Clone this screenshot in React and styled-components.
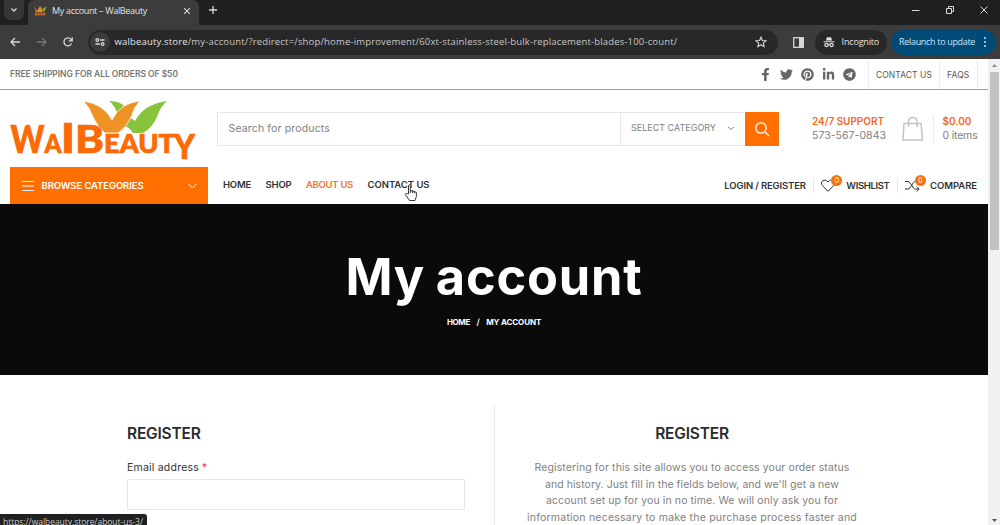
import React from 'react';
import styled, { createGlobalStyle } from 'styled-components';
import { FaFacebookF, FaTwitter, FaPinterest, FaLinkedinIn, FaTelegram } from 'react-icons/fa';

const GlobalStyle = createGlobalStyle`
    * { box-sizing: border-box; }
    html, body { margin: 0; height: 525px; overflow: hidden; background: #fff; }
`;

const Browser = styled.div`
    width: 1000px;
    height: 525px;
    display: flex;
    flex-direction: column;
    overflow: hidden;
    position: relative;
    font-family: 'Inter', 'Liberation Sans', sans-serif;
    font-size: 10px;
`;

const TabStrip = styled.div`
    height: 25px;
    flex: none;
    display: flex;
    align-items: stretch;
    background: #202020;
    color: #e3e3e3;
`;

const TabSearch = styled.div`
    width: 20px;
    height: 20px;
    margin: 0 4px 0 4px;
    border-radius: 0 0 7px 7px;
    background: #363636;
    display: flex;
    align-items: center;
    justify-content: center;
`;

const Tab = styled.div`
    width: 171px;
    background: #3c3c3c;
    border-radius: 6px 6px 0 0;
    display: flex;
    align-items: center;
    padding: 0 8px 4px 6px;
`;

const ChromeText = styled.span`
    font-family: 'Open Sans', 'Liberation Sans', sans-serif;
    font-size: ${(p) => p.$size || 9}px;
    letter-spacing: ${(p) => p.$ls || 0}px;
    color: ${(p) => p.$color || '#e3e3e3'};
    white-space: nowrap;
`;

const TabTitle = styled.div`
    flex: 1;
    margin-left: 5px;
    line-height: 14px;
    display: flex;
`;

const NewTab = styled.div`
    padding: 5px 0 0 9px;
    display: flex;
    align-items: flex-start;
`;

const WindowButtons = styled.div`
    margin-left: auto;
    display: flex;
    gap: 24px;
    padding: 5px 11px 0 0;
`;

const Toolbar = styled.div`
    height: 34px;
    flex: none;
    display: flex;
    align-items: center;
    background: #3c3c3c;
    padding: 0 4px 0 9px;
`;

const NavButtons = styled.div`
    display: flex;
    gap: 14.5px;
    width: 79px;
`;

const AddressBar = styled.div`
    width: 691px;
    height: 25px;
    border-radius: 13px;
    background: #282828;
    display: flex;
    align-items: center;
    padding: 0 11px 0 2px;
`;

const SiteInfo = styled.div`
    width: 20px;
    height: 20px;
    border-radius: 50%;
    background: #3c3c3c;
    display: flex;
    align-items: center;
    justify-content: center;
`;

const Url = styled.div`
    flex: 1;
    margin-left: 4.5px;
    line-height: 14px;
    padding-bottom: 1px;
`;

const SidePanel = styled.div`
    margin-left: 15px;
    width: 22px;
    display: flex;
`;

const Pill = styled.div`
    height: 25px;
    width: ${(p) => p.$width}px;
    border-radius: 13px;
    background: ${(p) => p.$bg};
    margin-right: ${(p) => p.$mr || 0}px;
    padding: 0 8px;
    line-height: 14px;
    display: flex;
    align-items: center;
    justify-content: space-between;
`;

const Viewport = styled.div`
    flex: 1;
    display: flex;
    min-height: 0;
`;

const Page = styled.div`
    width: 988px;
    background: #fff;
    overflow: hidden;
`;

const Scrollbar = styled.div`
    width: 12px;
    background: #f1f1f1;
    display: flex;
    flex-direction: column;
    align-items: center;
    justify-content: space-between;
`;

const Thumb = styled.div`
    width: 9px;
    height: 178px;
    background: #c1c1c1;
    margin-bottom: auto;
`;

const Arrow = styled.div`
    height: ${(p) => (p.$up ? 13 : 6)}px;
    display: flex;
    align-items: ${(p) => (p.$up ? 'center' : 'flex-start')};
`;

const Text = styled.span`
    font-size: ${(p) => p.$size}px;
    font-weight: ${(p) => p.$weight || 400};
    letter-spacing: ${(p) => p.$ls || 0}px;
    color: ${(p) => p.$color || '#333'};
    white-space: nowrap;
`;

const TopBar = styled.div`
    height: 31px;
    border-bottom: 1px solid #d9868a;
    display: flex;
    align-items: stretch;
    justify-content: space-between;
    padding: 0 3px 0 10px;
    line-height: 30px;
`;

const TopRight = styled.div`
    display: flex;
`;

const Socials = styled.div`
    display: flex;
    align-items: center;
    gap: 8px;
    margin-right: 12px;
    padding-top: 1px;
    color: #666;
`;

const TopLink = styled.div`
    border-left: 1px solid #ececec;
    padding-left: 7px;
    width: ${(p) => p.$width}px;
`;

const Header = styled.div`
    height: 77px;
    display: flex;
    align-items: flex-start;
    padding-left: 10px;
`;

const Logo = styled.svg`
    width: 188px;
    height: 70px;
    margin-top: 8px;
    margin-right: 19px;
`;

const SearchForm = styled.div`
    display: flex;
    width: 562px;
    height: 34px;
    margin-top: 22px;
    border: 1px solid #e6e6e6;
    border-right: none;
`;

const SearchInput = styled.div`
    width: 402px;
    padding-left: 10.5px;
    line-height: 31px;
`;

const SelectBox = styled.div`
    flex: 1;
    border-left: 1px solid #e6e6e6;
    padding: 0 10px 2px 10px;
    display: flex;
    align-items: center;
    justify-content: space-between;
    line-height: 30px;
`;

const SearchButton = styled.div`
    width: 34px;
    height: 34px;
    margin-top: -1px;
    background: #ff6f00;
    display: flex;
    align-items: center;
    justify-content: center;
`;

const InfoBlock = styled.div`
    display: flex;
    flex-direction: column;
    line-height: 14.5px;
    margin: 24px 0 0 ${(p) => p.$ml}px;
    padding-left: ${(p) => p.$pl || 0}px;
    border-left: ${(p) => (p.$pl ? '1px solid #ececec' : 'none')};
    width: ${(p) => p.$width}px;
`;

const Bag = styled.svg`
    width: 22px;
    height: 26px;
    margin-top: 26px;
`;

const NavRow = styled.div`
    height: 37px;
    display: flex;
    align-items: stretch;
    padding: 0 11px 0 10px;
`;

const Browse = styled.div`
    width: 198px;
    background: #ff6f00;
    display: flex;
    align-items: center;
    padding: 0 11px 0 12px;
`;

const BrowseLabel = styled.div`
    flex: 1;
    margin-left: 7.5px;
    line-height: 14px;
    display: flex;
`;

const Menu = styled.div`
    display: flex;
    margin-left: 15px;
    gap: 14.5px;
    line-height: 36px;
`;

const Tools = styled.div`
    margin-left: auto;
    display: flex;
    align-items: center;
    line-height: 36px;
`;

const Divider = styled.div`
    width: 1px;
    height: 15px;
    background: #e8e8e8;
    margin: 0 7px;
`;

const IconWithBadge = styled.div`
    position: relative;
    width: 18px;
    height: 16px;
    margin-right: 7.5px;
    display: flex;
    align-items: center;
`;

const Badge = styled.div`
    position: absolute;
    top: -3px;
    left: 10.5px;
    width: 11px;
    height: 11px;
    border-radius: 50%;
    background: #f4730f;
    color: #fff;
    font-size: 7px;
    line-height: 11px;
    text-align: center;
`;

const Hero = styled.div`
    height: 171px;
    background: #0a0a0a;
    display: flex;
    flex-direction: column;
    align-items: center;
`;

const Title = styled.h1`
    margin: 42px 0 0;
    font-size: 50.5px;
    line-height: 62px;
    font-weight: 700;
    letter-spacing: 0.8px;
    word-spacing: -2px;
    color: #fff;
`;

const Crumbs = styled.div`
    display: flex;
    gap: 6.5px;
    line-height: 12px;
    margin-top: 8px;
`;

const Columns = styled.div`
    display: flex;
    padding: 30px 0 0 127px;
    height: 151px;
`;

const FormColumn = styled.div`
    width: 368px;
    border-right: 1px solid #ececec;
    padding: 18px 29px 0 0;
`;

const AsideColumn = styled.div`
    width: 394px;
    padding-top: 18px;
    display: flex;
    flex-direction: column;
    align-items: center;
`;

const Heading = styled.div`
    line-height: 22px;
    margin-bottom: 13px;
`;

const Label = styled.div`
    line-height: 16px;
    margin-bottom: 3px;
`;

const Field = styled.div`
    height: 31px;
    border: 1px solid #e8e8e8;
`;

const Line = styled.div`
    line-height: 16.6px;
    height: 16.6px;
`;

const StatusBar = styled.div`
    position: absolute;
    left: 0;
    top: 514px;
    width: 147px;
    height: 20px;
    padding-left: 3px;
    line-height: 14px;
    background: #202020;
    border-top-right-radius: 3px;
`;

const Cursor = styled.svg`
    position: absolute;
    left: 404px;
    top: 183px;
    width: 14px;
    height: 19px;
`;

const chromeStroke = { fill: 'none', stroke: '#d8d8d8', strokeWidth: 1.3 };

const logoFont = { fontFamily: "'Lato', sans-serif", fontWeight: 900, fill: '#fb6a04', stroke: '#fb6a04', strokeWidth: 0.7 };

const menu = [
    ['HOME', -0.227],
    ['SHOP', -0.176],
    ['ABOUT US', -0.289],
    ['CONTACT US', -0.033],
];

const lines = [
    ['Registering for this site allows you to access your order status', 0.115],
    ["and history. Just fill in the fields below, and we'll get a new", 0.055],
    ['account set up for you in no time. We will only ask you for', 0.099],
    ['information necessary to make the purchase process faster and', 0.221],
];

const WalBeautyLogo = () => (
    <Logo viewBox="0 0 188 70">
        <g fill="#86c43c">
            <path d="M99 3 Q111 3 115 9 L108 18 Q105 7 99 3 Z" />
            <path d="M157 3 Q134 6 125 23 L121 20 L114 28 Q119 29 123 35 H133 Q142 30 147 19 Q150 9 157 3 Z" />
        </g>
        <path d="M73 3 Q94 6 102 22 Q110 5 130 3 Q124 9 122 17 Q117 29 108 35 H95 Q88 30 83 19 Q79 8 73 3 Z" fill="#ee9225" stroke="#fff" strokeWidth=".8" />
        <g style={logoFont}>
            <text x="0.5" y="55" fontSize="38" textLength="34" lengthAdjust="spacingAndGlyphs">W</text>
            <text x="34.5" y="55" fontSize="26" textLength="17" lengthAdjust="spacingAndGlyphs">A</text>
            <text x="51.5" y="55" fontSize="40" textLength="13" lengthAdjust="spacingAndGlyphs">l</text>
            <text x="65" y="55" fontSize="38" textLength="29" lengthAdjust="spacingAndGlyphs">B</text>
            <text x="94" y="55" fontSize="26" textLength="71" lengthAdjust="spacingAndGlyphs">EAUT</text>
            <text x="164" y="61" fontSize="34" textLength="21" lengthAdjust="spacingAndGlyphs">Y</text>
        </g>
    </Logo>
);

const App = () => (
    <Browser>
        <GlobalStyle />
        <TabStrip>
            <TabSearch>
                <svg width="8" height="6" viewBox="0 0 8 6"><path d="M1.5 1.5 L4 4 L6.5 1.5" {...chromeStroke} /></svg>
            </TabSearch>
            <Tab>
                <svg width="13" height="10" viewBox="0 0 13 10">
                    <path d="M0 0 L3 5 L6 0 L9 5 L8 6 L2 6 Z" fill="#ee8a20" />
                    <path d="M7 0 L9 3 L13 0 L10 6 Z" fill="#83bf3d" />
                    <path d="M1 8 H12" stroke="#d86a18" strokeWidth="3" strokeDasharray="2 .7" />
                </svg>
                <TabTitle><ChromeText $ls={-0.322}>My account – WalBeauty</ChromeText></TabTitle>
                <svg width="8" height="8" viewBox="0 0 7 7"><path d="M1 1 L6 6 M6 1 L1 6" {...chromeStroke} strokeWidth="1" /></svg>
            </Tab>
            <NewTab>
                <svg width="10" height="10" viewBox="0 0 10 10"><path d="M5 1 V9 M1 5 H9" {...chromeStroke} /></svg>
            </NewTab>
            <WindowButtons>
                <svg width="10" height="10" viewBox="0 0 10 10"><path d="M1 5.5 H8.5" {...chromeStroke} strokeWidth="1" /></svg>
                <svg width="10" height="10" viewBox="0 0 10 10"><path d="M1.5 3.5 H6.5 V8.5 H1.5 Z M3.5 3 V1.5 H8.5 V6.5 H7" {...chromeStroke} strokeWidth="1" /></svg>
                <svg width="10" height="10" viewBox="0 0 10 10"><path d="M1.5 1.5 L8.5 8.5 M8.5 1.5 L1.5 8.5" {...chromeStroke} strokeWidth="1" /></svg>
            </WindowButtons>
        </TabStrip>
        <Toolbar>
            <NavButtons>
                <svg width="12" height="12" viewBox="0 0 12 12"><path d="M11 6 H2.5 M6 2 L2 6 L6 10" {...chromeStroke} /></svg>
                <svg width="12" height="12" viewBox="0 0 12 12"><path d="M1 6 H9.5 M6 2 L10 6 L6 10" {...chromeStroke} stroke="#777" /></svg>
                <svg width="12" height="12" viewBox="0 0 12 12"><path d="M9.6 7.5 A4 4 0 1 1 9 3.3 L10 4.5 M10.2 1.2 V4.8 H6.6" {...chromeStroke} /></svg>
            </NavButtons>
            <AddressBar>
                <SiteInfo>
                    <svg width="10" height="10" viewBox="0 0 10 10"><path d="M5 3 H9.5 M.5 7 H5" {...chromeStroke} /><circle cx="2.3" cy="3" r="1.3" {...chromeStroke} /><circle cx="7.7" cy="7" r="1.3" {...chromeStroke} /></svg>
                </SiteInfo>
                <Url>
                    <ChromeText $size={9.5} $ls={0.168}>walbeauty.store</ChromeText>
                    <ChromeText $size={9.5} $ls={0.168} $color="#c7c7c7">/my-account/?redirect=/shop/home-improvement/60xt-stainless-steel-bulk-replacement-blades-100-count/</ChromeText>
                </Url>
                <svg width="12" height="12" viewBox="0 0 12 12"><path d="M6 1.2 L7.4 4.5 L11 4.8 L8.3 7.1 L9.1 10.6 L6 8.7 L2.9 10.6 L3.7 7.1 L1 4.8 L4.6 4.5 Z" {...chromeStroke} strokeWidth="1.1" /></svg>
            </AddressBar>
            <SidePanel>
                <svg width="11" height="11" viewBox="0 0 11 11"><rect x=".7" y=".7" width="9.6" height="9.6" {...chromeStroke} /><rect x="6" y="1" width="4.5" height="9" fill="#d8d8d8" /></svg>
            </SidePanel>
            <Pill $width={72} $bg="#282828" $mr={4}>
                <svg width="12" height="12" viewBox="0 0 12 12"><path d="M3 4.6 L4 1 L6 1.6 L8 1 L9 4.6 Z" fill="#e3e3e3" /><path d="M.5 5.7 H11.5 M4.9 8.7 Q6 8 7.1 8.7" {...chromeStroke} strokeWidth="1.1" /><circle cx="3.4" cy="9" r="1.6" {...chromeStroke} /><circle cx="8.6" cy="9" r="1.6" {...chromeStroke} /></svg>
                <ChromeText $ls={-0.174}>Incognito</ChromeText>
            </Pill>
            <Pill $width={105} $bg="#004a77">
                <ChromeText $color="#c2e7ff" $ls={-0.325}>Relaunch to update</ChromeText>
                <svg width="6" height="12" viewBox="0 0 6 12" fill="#c2e7ff"><circle cx="3" cy="2" r="1" /><circle cx="3" cy="6" r="1" /><circle cx="3" cy="10" r="1" /></svg>
            </Pill>
        </Toolbar>
        <Viewport>
            <Page>
                <TopBar>
                    <Text $size={8.5} $weight={600} $color="#777" $ls={-0.039}>FREE SHIPPING FOR ALL ORDERS OF $50</Text>
                    <TopRight>
                        <Socials>
                            <FaFacebookF size={13} />
                            <FaTwitter size={13} />
                            <FaPinterest size={13} />
                            <FaLinkedinIn size={13} />
                            <FaTelegram size={13} />
                        </Socials>
                        <TopLink $width={71}><Text $size={8.5} $color="#555" $ls={0.067}>CONTACT US</Text></TopLink>
                        <TopLink $width={38}><Text $size={8.5} $color="#555" $ls={0.18}>FAQS</Text></TopLink>
                        <TopLink $width={8} />
                    </TopRight>
                </TopBar>
                <Header>
                    <WalBeautyLogo />
                    <SearchForm>
                        <SearchInput><Text $size={10.5} $color="#808080" $ls={0.153}>Search for products</Text></SearchInput>
                        <SelectBox>
                            <Text $size={9} $color="#808080">SELECT CATEGORY</Text>
                            <svg width="8" height="5" viewBox="0 0 8 5"><path d="M1 1 L4 3.5 L7 1" fill="none" stroke="#888" /></svg>
                        </SelectBox>
                        <SearchButton>
                            <svg width="16" height="16" viewBox="0 0 16 16" fill="none" stroke="#fff" strokeWidth="1.3"><circle cx="7" cy="7" r="5.2" /><path d="M11 11 L15 15" /></svg>
                        </SearchButton>
                    </SearchForm>
                    <InfoBlock $ml={33} $width={90}>
                        <Text $size={10} $weight={600} $color="#f26a1b" $ls={-0.033}>24/7 SUPPORT</Text>
                        <Text $size={10.5} $color="#808080" $ls={0.039}>573-567-0843</Text>
                    </InfoBlock>
                    <Bag viewBox="0 0 22 26" fill="none" stroke="#c4c4c4" strokeWidth="1.5">
                        <path d="M2 7.5 H19 L20.5 24 H1 Z M6.5 11 V6 Q6.5 1.5 10.8 1.5 Q15 1.5 15 6 V11" />
                    </Bag>
                    <InfoBlock $ml={9} $pl={8.5} $width={55}>
                        <Text $size={10} $weight={600} $color="#f26a1b">$0.00</Text>
                        <Text $size={10.5} $color="#808080" $ls={-0.19}>0 items</Text>
                    </InfoBlock>
                </Header>
                <NavRow>
                    <Browse>
                        <svg width="12" height="10" viewBox="0 0 12 10" stroke="#fff"><path d="M0 .5 H12 M0 5 H12 M0 9.5 H12" /></svg>
                        <BrowseLabel><Text $size={9.5} $weight={600} $color="#fff" $ls={-0.097}>BROWSE CATEGORIES</Text></BrowseLabel>
                        <svg width="9" height="6" viewBox="0 0 9 6" fill="none" stroke="#fff"><path d="M.5 1 L4.5 5 L8.5 1" /></svg>
                    </Browse>
                    <Menu>
                        {menu.map(([name, ls]) => (
                            <Text key={name} $size={9.5} $weight={600} $color={name === 'ABOUT US' ? '#f0772b' : '#333'} $ls={ls}>{name}</Text>
                        ))}
                    </Menu>
                    <Tools>
                        <Text $size={9.5} $weight={600} $ls={-0.147}>LOGIN / REGISTER</Text>
                        <Divider />
                        <IconWithBadge>
                            <svg width="14" height="13" viewBox="0 0 14 13" fill="none" stroke="#333"><path d="M7 12.3 L1.5 6.6 A3.2 3.2 0 0 1 2 1.6 Q5 -.2 7 3 Q9 -.2 12 1.6 A3.2 3.2 0 0 1 12.5 6.6 Z" /></svg>
                            <Badge>0</Badge>
                        </IconWithBadge>
                        <Text $size={9.5} $weight={600} $ls={-0.36}>WISHLIST</Text>
                        <Divider />
                        <IconWithBadge>
                            <svg width="15" height="13" viewBox="0 0 15 13" fill="none" stroke="#333"><path d="M0 2.5 H3 Q4 2.5 5 3.8 L8.5 9 Q9.5 10 10.5 10 H14 M0 10 H3 Q4 10 5 8.8 L8.5 3.5 Q9.5 2.5 10.5 2.5 H12 M11.7 7.5 L14.2 10 L11.7 12.5" /></svg>
                            <Badge>0</Badge>
                        </IconWithBadge>
                        <Text $size={9.5} $weight={600} $ls={-0.042}>COMPARE</Text>
                    </Tools>
                </NavRow>
                <Hero>
                    <Title>My account</Title>
                    <Crumbs>
                        <Text $size={8} $weight={700} $color="#fff" $ls={-0.363}>HOME</Text>
                        <Text $size={8.5} $weight={600} $color="#fff">/</Text>
                        <Text $size={8} $weight={700} $color="#fff" $ls={-0.113}>MY ACCOUNT</Text>
                    </Crumbs>
                </Hero>
                <Columns>
                    <FormColumn>
                        <Heading><Text $size={15.5} $weight={600} $color="#2b2b2b" $ls={-0.2}>REGISTER</Text></Heading>
                        <Label><Text $size={10.5} $ls={0.216}>Email address</Text> <Text $size={11} $color="#e0405a">*</Text></Label>
                        <Field />
                    </FormColumn>
                    <AsideColumn>
                        <Heading><Text $size={15.5} $weight={600} $color="#2b2b2b" $ls={-0.2}>REGISTER</Text></Heading>
                        {lines.map(([text, ls]) => (
                            <Line key={text}><Text $size={10.5} $color="#808080" $ls={ls}>{text}</Text></Line>
                        ))}
                    </AsideColumn>
                </Columns>
            </Page>
            <Scrollbar>
                <Arrow $up><svg width="5" height="3" viewBox="0 0 5 3"><path d="M0 3 L2.5 0 L5 3 Z" fill="#8a8a8a" /></svg></Arrow>
                <Thumb />
                <Arrow><svg width="5" height="3" viewBox="0 0 5 3"><path d="M0 0 L2.5 3 L5 0 Z" fill="#505050" /></svg></Arrow>
            </Scrollbar>
        </Viewport>
        <StatusBar><ChromeText $size={8.5} $color="#c8c8c8" $ls={-0.041}>https://walbeauty.store/about-us-3/</ChromeText></StatusBar>
        <Cursor viewBox="0 0 14 19"><path d="M4.5 11 V2.3 Q5.3 1 6.3 2.3 V8 L8 7.6 L10 8.4 L12.4 9.4 V13.5 L11 17.5 H5.5 L1.3 11.5 Q1.6 9.8 3.2 10.6 Z M6.3 8 V10 M8.4 8 V10 M10.4 8.6 V10.4" fill="#fff" stroke="#222" strokeWidth=".9" /></Cursor>
    </Browser>
);

export default App;
